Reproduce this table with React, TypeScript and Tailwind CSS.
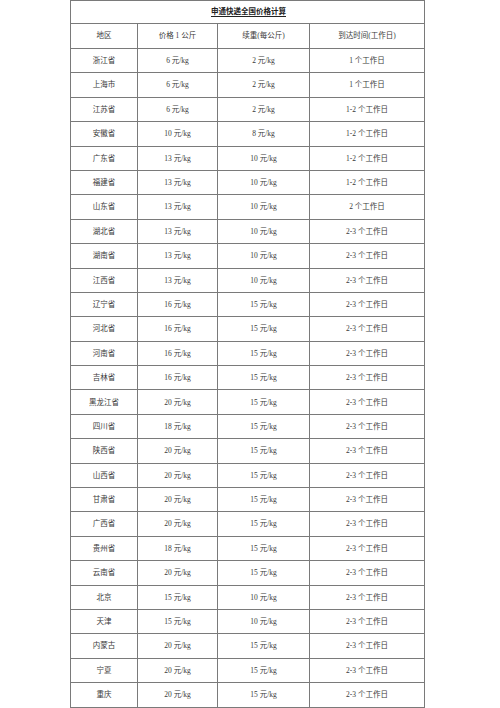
const ROWS: [string, string, string, string][] = [
  ['浙江省', '6 元/kg', '2 元/kg', '1 个工作日'],
  ['上海市', '6 元/kg', '2 元/kg', '1 个工作日'],
  ['江苏省', '6 元/kg', '2 元/kg', '1-2 个工作日'],
  ['安徽省', '10 元/kg', '8 元/kg', '1-2 个工作日'],
  ['广东省', '13 元/kg', '10 元/kg', '1-2 个工作日'],
  ['福建省', '13 元/kg', '10 元/kg', '1-2 个工作日'],
  ['山东省', '13 元/kg', '10 元/kg', '2 个工作日'],
  ['湖北省', '13 元/kg', '10 元/kg', '2-3 个工作日'],
  ['湖南省', '13 元/kg', '10 元/kg', '2-3 个工作日'],
  ['江西省', '13 元/kg', '10 元/kg', '2-3 个工作日'],
  ['辽宁省', '16 元/kg', '15 元/kg', '2-3 个工作日'],
  ['河北省', '16 元/kg', '15 元/kg', '2-3 个工作日'],
  ['河南省', '16 元/kg', '15 元/kg', '2-3 个工作日'],
  ['吉林省', '16 元/kg', '15 元/kg', '2-3 个工作日'],
  ['黑龙江省', '20 元/kg', '15 元/kg', '2-3 个工作日'],
  ['四川省', '18 元/kg', '15 元/kg', '2-3 个工作日'],
  ['陕西省', '20 元/kg', '15 元/kg', '2-3 个工作日'],
  ['山西省', '20 元/kg', '15 元/kg', '2-3 个工作日'],
  ['甘肃省', '20 元/kg', '15 元/kg', '2-3 个工作日'],
  ['广西省', '20 元/kg', '15 元/kg', '2-3 个工作日'],
  ['贵州省', '18 元/kg', '15 元/kg', '2-3 个工作日'],
  ['云南省', '20 元/kg', '15 元/kg', '2-3 个工作日'],
  ['北京', '15 元/kg', '10 元/kg', '2-3 个工作日'],
  ['天津', '15 元/kg', '10 元/kg', '2-3 个工作日'],
  ['内蒙古', '20 元/kg', '15 元/kg', '2-3 个工作日'],
  ['宁夏', '20 元/kg', '15 元/kg', '2-3 个工作日'],
  ['重庆', '20 元/kg', '15 元/kg', '2-3 个工作日'],
];

const cell = 'border border-[#7a7a7a] text-center align-middle p-0';

export default function App() {
  return (
    <div
      className="w-[500px] h-[708px] overflow-hidden bg-white text-[#3a3a3a] text-[7.5px]"
      style={{ fontFamily: '"Liberation Serif", "Noto Sans CJK SC", serif' }}
    >
      <table className="ml-[70px] w-[354px] table-fixed border-collapse">
        <colgroup>
          <col className="w-[67px]" />
          <col className="w-[80px]" />
          <col className="w-[92px]" />
          <col className="w-[115px]" />
        </colgroup>
        <tbody>
          <tr className="h-[23px]">
            <td colSpan={4} className={`${cell} font-bold underline underline-offset-2 pl-[2px] text-[#222]`}>
              申通快递全国价格计算
            </td>
          </tr>
          <tr className="h-[25px]">
            <td className={cell}>地区</td>
            <td className={cell}>价格 1 公斤</td>
            <td className={cell}>续重(每公斤)</td>
            <td className={cell}>到达时间(工作日)</td>
          </tr>
          {ROWS.map((r) => (
            <tr key={r[0]} className="h-[24.4px]">
              {r.map((v, i) => (
                <td key={i} className={cell}>
                  {v}
                </td>
              ))}
            </tr>
          ))}
        </tbody>
      </table>
    </div>
  );
}
